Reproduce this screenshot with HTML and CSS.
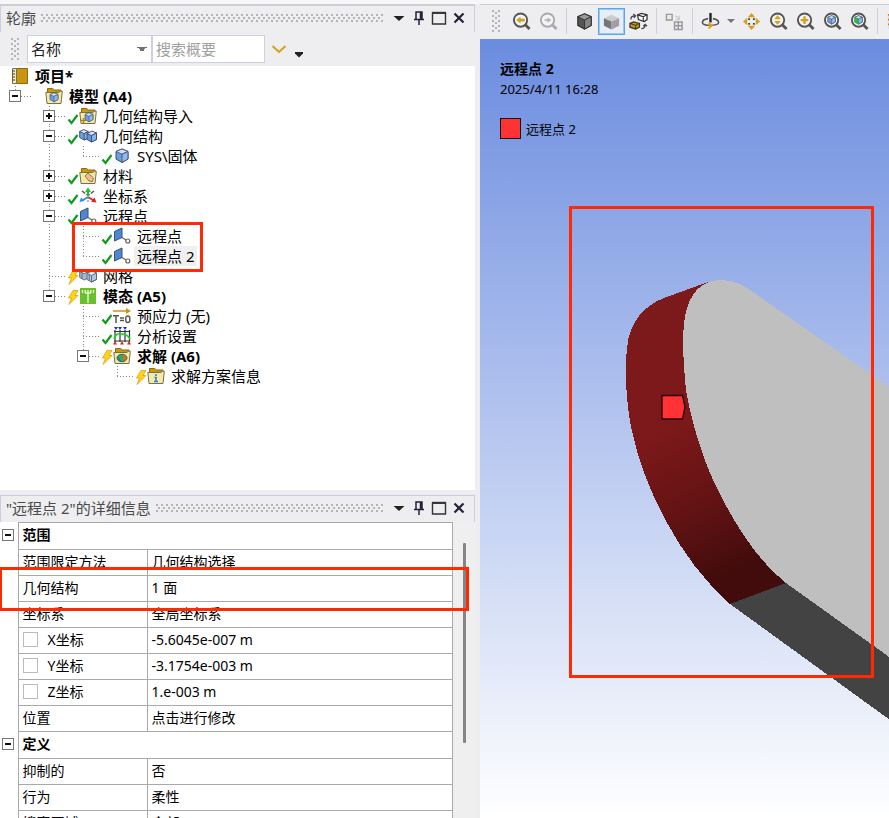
FILE: index.html
```html
<!DOCTYPE html>
<html lang="zh-CN">
<head>
<meta charset="utf-8">
<title>远程点 2</title>
<link rel="stylesheet" href="styles.css">
</head>
<body>
<svg class="defs" aria-hidden="true">
  <symbol id="check" viewBox="0 0 12 18"><path d="M1.500 12.500 4.500 16 10.500 8" fill="none" stroke="#129a1c" stroke-width="2.200"/></symbol>
  <symbol id="bolt" viewBox="0 0 12 18"><path d="M6 3.500h5L8 8.500h3L2 17.500 4.500 11H1.500z" fill="#ffd21c" stroke="#d9a400" stroke-width=".8"/></symbol>
  <symbol id="folder" viewBox="0 0 18 18"><path d="M2.500 5V1.500h5l2 1.500H16v4H2.500z" fill="#c9960f" stroke="#8d6a0c"/><path d="M.8 5.500h13l1.500-1.200h2L16 16.500H2z" fill="#f6e9a4" stroke="#77704c"/></symbol>
  <symbol id="cube" viewBox="0 0 18 18"><path d="m9 2 6 2.500v7.500l-6 3.500L3 12V4.500z" fill="#6d9fe0" stroke="#3b4a60"/><path d="m9 2 6 2.500-6 2.700-6-2.700z" fill="#cfe2fb" stroke="#3b4a60" stroke-width=".8"/><path d="M9 7.200v8.300l6-3.500V4.500z" fill="#8eb8ef" stroke="#3b4a60" stroke-width=".8"/></symbol>
  <symbol id="blocks" viewBox="0 0 18 18"><g stroke="#3b4a60" stroke-width=".9"><path d="M.7 4.500v6l4.500 2.500 4-2v-6z" fill="#6fa0e2"/><path d="m.7 4.500 4-2 4.500 2-4 2.200z" fill="#d7e6fa"/><path d="M5.200 6.700V13l4-2V4.500z" fill="#8db6ec"/><path d="M8 6.500v6l4.500 2.500 5-2.500V6z" fill="#5f95e2"/><path d="m8 6.500 5-2.500 4.500 2-5 2.500z" fill="#d7e6fa"/><path d="M12.500 8.500V15l5-2.500V6z" fill="#84b2f2"/></g></symbol>
  <symbol id="mesh" viewBox="0 0 18 18"><g stroke="#5b6470" stroke-width=".9"><path d="M.7 4.500v6l4.500 2.500 4-2v-6z" fill="#a9b9d0"/><path d="m.7 4.500 4-2 4.500 2-4 2.200z" fill="#e8eef7"/><path d="M8 6.500v6l4.500 2.500 5-2.500V6z" fill="#b3c6e2"/><path d="m8 6.500 5-2.500 4.500 2-5 2.500z" fill="#e8eef7"/><path d="M12.500 8.500V15l5-2.500V6M3 5.600v6M10.200 7.500v6" fill="none"/></g></symbol>
  <symbol id="remote" viewBox="0 0 18 18"><path d="M1.500 4.500 9 1v9.500L1.500 14z" fill="#4b86dc" stroke="#3f5068"/><path d="M9 10.500 13 13" stroke="#666" stroke-width="1.300"/><circle cx="14.800" cy="14" r="2" fill="#fff" stroke="#666" stroke-width="1.200"/></symbol>
  <symbol id="mag" viewBox="0 0 20 20"><circle cx="9" cy="8.500" r="7" fill="#f4f4f6" stroke="currentColor" stroke-width="2"/><path d="m13.500 13 5 5" stroke="currentColor" stroke-width="3"/></symbol>
</svg>

<div class="app">
  <div class="side">
    <section class="panel outline">
      <header class="title">
        <h2>轮廓</h2><span class="dots"></span>
        <button type="button" aria-label="菜单"><svg viewBox="0 0 16 16"><path d="M2.500 6h11L8 11z" fill="#222"/></svg></button>
        <button type="button" aria-label="固定"><svg viewBox="0 0 16 16"><path d="M5 9.500V2h6v7.500M3 9.500h10M8 10v5M9.500 2v7" fill="none" stroke="#222238" stroke-width="1.500"/></svg></button>
        <button type="button" aria-label="最大化"><svg viewBox="0 0 16 16"><path d="M1.500 3h13v11h-13z" fill="none" stroke="#333" stroke-width="1.400"/><path d="M1 2.800h14" stroke="#333" stroke-width="2"/></svg></button>
        <button type="button" aria-label="关闭"><svg viewBox="0 0 16 16"><path d="m3.500 3.500 9 9m0-9-9 9" stroke="#222238" stroke-width="2.200"/></svg></button>
      </header>
      <div class="filter">
        <span class="grip"></span>
        <select aria-label="筛选"><option>名称</option></select>
        <input type="text" placeholder="搜索概要" aria-label="搜索概要">
        <button type="button" class="expand" aria-label="展开"><svg viewBox="0 0 16 16"><path d="m1.500 5 6.500 6 6.500-6" fill="none" stroke="#d2a11d" stroke-width="2"/></svg></button>
        <button type="button" class="more" aria-label="更多"><svg viewBox="0 0 8 6"><path d="M0 0h8v1.500L4 5.500 0 1.500z" fill="#222"/></svg></button>
      </div>
      <ul class="tree">
        <li class="root"><div class="node"><svg class="icon" viewBox="0 0 18 18"><path d="M5.500 1.500h11v15h-11z" fill="#c9960f" stroke="#8d6a0c"/><path d="M1.500 1.500h4v15h-4z" fill="#f2e6bb" stroke="#77704c"/><path d="M1 4h3M1 7h3M1 10h3M1 13h3" stroke="#444"/></svg><b>项目*</b></div>
        <ul>
          <li><div class="node"><button type="button" class="tog" aria-label="折叠"></button><i class="lead"></i><span class="stat"></span><svg class="icon" viewBox="0 0 18 18"><use href="#folder"/><use href="#cube" x="3" y="4" width="12" height="13"/></svg><b>模型 (A4)</b></div>
          <ul>
            <li><div class="node"><button type="button" class="tog plus" aria-label="展开"></button><i class="lead"></i><svg class="stat"><use href="#check"/></svg><svg class="icon" viewBox="0 0 18 18"><use href="#folder"/><use href="#cube" x="4" y="4" width="12" height="13"/><path d="M2 13.500h5M4.500 11v5" stroke="#b98200" stroke-width="1.300"/></svg><span>几何结构导入</span></div></li>
            <li><div class="node"><button type="button" class="tog" aria-label="折叠"></button><i class="lead"></i><svg class="stat"><use href="#check"/></svg><svg class="icon"><use href="#blocks"/></svg><span>几何结构</span></div>
            <ul>
              <li><div class="node leaf"><i class="lead"></i><svg class="stat"><use href="#check"/></svg><svg class="icon"><use href="#cube"/></svg><span>SYS\固体</span></div></li>
            </ul></li>
            <li><div class="node"><button type="button" class="tog plus" aria-label="展开"></button><i class="lead"></i><svg class="stat"><use href="#check"/></svg><svg class="icon" viewBox="0 0 18 18"><use href="#folder"/><path d="m6 9 3-3 5.500 5-1 3.500-3.500-.5z" fill="#eebd8c" stroke="#8a6a4a" stroke-width=".9"/></svg><span>材料</span></div></li>
            <li><div class="node"><button type="button" class="tog plus" aria-label="展开"></button><i class="lead"></i><svg class="stat"><use href="#check"/></svg><svg class="icon" viewBox="0 0 18 18"><path d="m3 4 5 4M15 4l-5 4" stroke="#555" stroke-width="1.500" stroke-dasharray="4 1.500"/><path d="M9 9V4" stroke="#14c81e" stroke-width="2"/><path d="M6 5h6L9 .5z" fill="#14c81e"/><path d="m9 10-5 3" stroke="#2a8cf0" stroke-width="1.600"/><path d="m.5 15 1.500-4.500 3.500 3.500z" fill="#2a8cf0"/><path d="m9 10 5 3" stroke="#e02020" stroke-width="1.600"/><path d="m17.500 15.500-5.500-.8 3.500-4.200z" fill="#e02020"/><path d="M9 10v6" stroke="#777" stroke-dasharray="2 1"/></svg><span>坐标系</span></div></li>
            <li><div class="node"><button type="button" class="tog" aria-label="折叠"></button><i class="lead"></i><svg class="stat"><use href="#check"/></svg><svg class="icon"><use href="#remote"/></svg><span>远程点</span></div>
            <ul>
              <li><div class="node leaf"><i class="lead"></i><svg class="stat"><use href="#check"/></svg><svg class="icon"><use href="#remote"/></svg><span>远程点</span></div></li>
              <li><div class="node leaf"><i class="lead"></i><svg class="stat"><use href="#check"/></svg><svg class="icon"><use href="#remote"/></svg><span class="picked">远程点 2</span></div></li>
            </ul></li>
            <li><div class="node leaf"><i class="lead"></i><svg class="stat"><use href="#bolt"/></svg><svg class="icon"><use href="#mesh"/></svg><span>网格</span></div></li>
            <li><div class="node"><button type="button" class="tog" aria-label="折叠"></button><i class="lead"></i><svg class="stat"><use href="#bolt"/></svg><svg class="icon" viewBox="0 0 18 18"><path d="M1 1h16v16H1z" fill="#6abf2a"/><path d="M9 3v13M3.500 3v3M6.200 3v3M11.800 3v3M14.500 3v3M6 6h6" fill="none" stroke="#eaffdc" stroke-width="1.300"/></svg><b>模态 (A5)</b></div>
            <ul>
              <li><div class="node leaf"><i class="lead"></i><svg class="stat"><use href="#check"/></svg><svg class="icon" viewBox="0 0 18 18"><path d="M0 4h14" stroke="#c9960f" stroke-width="1.500"/><path d="m13 1 5 3-5 3z" fill="#c9960f"/><path d="M0 8.800h6M3 8.500V16M7 11h4M7 13.500h4" stroke="#555" stroke-width="1.500"/><rect x="12.800" y="9" width="4" height="6.500" rx="2" fill="none" stroke="#555" stroke-width="1.400"/></svg><span>预应力 (无)</span></div></li>
              <li><div class="node leaf"><i class="lead"></i><svg class="stat"><use href="#check"/></svg><svg class="icon" viewBox="0 0 18 18"><path d="M2 3v12M7 3v12M12 3v12M16.500 3v12M1 4.500h16M1 14h16" stroke="#333" stroke-width="1.200"/><path d="M1 12C3 6 6 6.500 8.500 7s6 0 8.500 5" fill="none" stroke="#19d52b" stroke-width="1.700"/><path d="M1 0h4L3 3zM5 0h4L7 3zM10 0h4l-2 3z" fill="#1a2de8"/><path d="m0 17.500 2-3.500 2 3.500zm7 0 2-3.500 2 3.500zm7 0 2-3.500 2 3.500z" fill="#e82020"/></svg><span>分析设置</span></div></li>
              <li><div class="node"><button type="button" class="tog" aria-label="折叠"></button><i class="lead"></i><svg class="stat"><use href="#bolt"/></svg><svg class="icon" viewBox="0 0 18 18"><use href="#folder"/><ellipse cx="9" cy="11" rx="5" ry="3.800" fill="#29b34a" stroke="#444" stroke-width=".8"/><path d="M5 9c1 3 3 5 5 5.500-3 .5-6-2-5-5.500z" fill="#2465e0"/><path d="M10 8c3 0 4.500 3 2.500 6-2-1-3-3-2.500-6z" fill="#e0672a"/></svg><b>求解 (A6)</b></div>
              <ul>
                <li><div class="node leaf"><i class="lead"></i><svg class="stat"><use href="#bolt"/></svg><svg class="icon" viewBox="0 0 18 18"><use href="#folder"/><path d="M9 7v2M7.500 10.500H9v4M7 14.500h4" fill="none" stroke="#2a83d8" stroke-width="1.600"/></svg><span>求解方案信息</span></div></li>
              </ul></li>
            </ul></li>
          </ul></li>
        </ul></li>
      </ul>
    </section>

    <section class="panel details">
      <header class="title">
        <h2>"远程点 2"的详细信息</h2><span class="dots"></span>
        <button type="button" aria-label="菜单"><svg viewBox="0 0 16 16"><path d="M2.500 6h11L8 11z" fill="#222"/></svg></button>
        <button type="button" aria-label="固定"><svg viewBox="0 0 16 16"><path d="M5 9.500V2h6v7.500M3 9.500h10M8 10v5M9.500 2v7" fill="none" stroke="#222238" stroke-width="1.500"/></svg></button>
        <button type="button" aria-label="最大化"><svg viewBox="0 0 16 16"><path d="M1.500 3h13v11h-13z" fill="none" stroke="#333" stroke-width="1.400"/><path d="M1 2.800h14" stroke="#333" stroke-width="2"/></svg></button>
        <button type="button" aria-label="关闭"><svg viewBox="0 0 16 16"><path d="m3.500 3.500 9 9m0-9-9 9" stroke="#222238" stroke-width="2.200"/></svg></button>
      </header>
      <div class="sheet">
        <table>
          <colgroup><col class="c-tog"><col class="c-name"><col></colgroup>
          <tr class="group"><td><button type="button" class="tog" aria-label="折叠"></button></td><th colspan="2">范围</th></tr>
          <tr><td></td><td>范围限定方法</td><td>几何结构选择</td></tr>
          <tr><td></td><td>几何结构</td><td>1 面</td></tr>
          <tr><td></td><td>坐标系</td><td>全局坐标系</td></tr>
          <tr><td></td><td><label><input type="checkbox">X坐标</label></td><td>-5.6045e-007 m</td></tr>
          <tr><td></td><td><label><input type="checkbox">Y坐标</label></td><td>-3.1754e-003 m</td></tr>
          <tr><td></td><td><label><input type="checkbox">Z坐标</label></td><td>1.e-003 m</td></tr>
          <tr><td></td><td>位置</td><td>点击进行修改</td></tr>
          <tr class="group"><td><button type="button" class="tog" aria-label="折叠"></button></td><th colspan="2">定义</th></tr>
          <tr><td></td><td>抑制的</td><td>否</td></tr>
          <tr><td></td><td>行为</td><td>柔性</td></tr>
          <tr><td></td><td>搜索区域</td><td>全部</td></tr>
        </table>
        <div class="track"><div class="thumb"></div></div>
      </div>
    </section>
  </div>

  <main class="view">
    <div class="tools">
      <span class="grip"></span>
      <button type="button" aria-label="上一视图"><svg viewBox="0 0 20 20"><use href="#mag"/><path d="M4.500 8.500 9 5v2h4.500v3H9v2z" fill="#d2a11d"/></svg></button>
      <button type="button" class="off" aria-label="下一视图"><svg viewBox="0 0 20 20"><use href="#mag"/><path d="M13 8.500 9 5.500v2H6v2h3v2z" fill="#b5b5b5"/></svg></button>
      <span class="sep"></span>
      <button type="button" aria-label="着色与边"><svg viewBox="0 0 20 20"><path d="m10 2 7 3v9l-7 4-7-4V5z" fill="#555" stroke="#333" stroke-width="1.400"/><path d="m10 2 7 3-7 3.500L3 5z" fill="#999" stroke="#333"/><path d="M10 8.500V18l7-4V5z" fill="#858585" stroke="#333"/></svg></button>
      <button type="button" class="on" aria-label="着色"><svg viewBox="0 0 20 20"><path d="m10 3 8 3.500-8 3.500-8-3.500z" fill="#ccc"/><path d="M2 6.500v8l8 4V10z" fill="#777"/><path d="M18 6.500v8l-8 4V10z" fill="#a0a0a0"/></svg></button>
      <button type="button" aria-label="显示样式"><svg viewBox="0 0 20 20"><path d="m9 3 4-1.500L19 3v5l-3 2-6-2z" fill="#fff" stroke="#333" stroke-width="1.300"/><path d="m9 3 6 2v5m0-5 4-2" fill="none" stroke="#333" stroke-width="1.200"/><path d="m1 12 4-1.500 6 1.500v4l-4 2-6-2z" fill="#c9960f" stroke="#333" stroke-width="1.300"/><path d="m1 12 6 2v4m0-4 4-2" fill="none" stroke="#333"/><path d="M2 8c0-3 1-4 4-4M4.500 2 7 4 5 6M13 17.500c3 0 4-1 4-4M15 15l2-2 2 2" fill="none" stroke="#444" stroke-width="1.300"/></svg></button>
      <span class="sep"></span>
      <button type="button" aria-label="复制"><svg viewBox="0 0 20 20" fill="none" stroke="#999" stroke-width="1.500"><path d="M1.500 2.500h6v6h-6zM10 10.500h8v8h-8zM14 10.500v8M10 14.500h8"/><path d="m11 4 4 4m0-4v4h-4" stroke="#ccc"/></svg></button>
      <span class="sep"></span>
      <button type="button" aria-label="旋转"><svg viewBox="0 0 20 20"><path d="M7.500 7C4 7.500 1.500 9 1.500 11c0 2 4 3 8.500 3s8.500-1 8.500-3c0-1.800-2.500-3.300-6-4" fill="none" stroke="#555" stroke-width="1.700"/><path d="M10 1v10" stroke="#222" stroke-width="2.500"/><path d="m8 10.500 5 3.500-5 4.500z" fill="#d2a11d"/></svg></button>
      <button type="button" class="caret" aria-label="旋转选项"><svg viewBox="0 0 8 6"><path d="M0 1h8L4 5z" fill="#777"/></svg></button>
      <button type="button" aria-label="平移"><svg viewBox="0 0 20 20"><path d="m10 1 4 4.500H6zM10 19l4-4.500H6zM1 10l4.500-4v8zM19 10l-4.500-4v8z" fill="#d2a11d"/><path d="M6.500 6.500h2v2h-2zM11.500 6.500h2v2h-2zM6.500 11.500h2v2h-2zM11.500 11.500h2v2h-2z" fill="#444"/></svg></button>
      <button type="button" aria-label="缩放"><svg viewBox="0 0 20 20"><use href="#mag"/><path d="m9 3.500 3.500 4h-7zM9 13.500l3.500-4h-7z" fill="#d2a11d"/></svg></button>
      <button type="button" aria-label="框选缩放"><svg viewBox="0 0 20 20"><use href="#mag"/><path d="M9 4.500v8M5 8.500h8" stroke="#d2a11d" stroke-width="2.500"/></svg></button>
      <button type="button" aria-label="缩放到合适"><svg viewBox="0 0 20 20"><use href="#mag"/><use href="#cube" x="3" y="2.500" width="12" height="12"/></svg></button>
      <button type="button" aria-label="缩放到选择"><svg viewBox="0 0 20 20"><use href="#mag"/><use href="#cube" x="3" y="2.500" width="12" height="12"/><path d="M5 5.500 9 7.300v5.500L5 11z" fill="#1fc03a"/></svg></button>
      <span class="sep"></span>
      <button type="button" aria-label="放大镜"><svg viewBox="0 0 20 20"><path d="M2 3h16M2 8h16M2 13h16M4 3v15" stroke="#c4793a" stroke-width="2"/></svg></button>
    </div>
    <div class="canvas">
      <svg class="scene" viewBox="480 39 409 779" preserveAspectRatio="xMinYMin slice" aria-hidden="true">
        <defs><linearGradient id="face" x1="0" y1="0" x2=".25" y2="1"><stop offset="0" stop-color="#7d1a1b"/><stop offset=".5" stop-color="#7c1819"/><stop offset=".75" stop-color="#641314"/><stop offset="1" stop-color="#430c0c"/></linearGradient></defs>
        <g shape-rendering="crispEdges">
          <path d="M730 604 786 583 1090 801V865z" fill="#434343"/>
          <path d="M708 282 664 298C643 306 632 322 628 340 624 368 626 400 631 427 640 470 655 500 666 521 683 553 705 582 730 604L786 583 760 297z" fill="url(#face)"/>
          <path d="M786 583C750 555 725 505 713 480 700 451 690 415 686 390 682 350 682 325 687 308 694 285 709 280 722 280 736 280 747 287 760 297L889 387 1090 527V801z" fill="#bfbfbf"/>
        </g>
        <path d="M662 395.500h20.500l2.500 11.500-2.500 12H662z" fill="#f33" stroke="#2a0505" stroke-width="1.300"/>
      </svg>
      <div class="legend">
        <strong>远程点 2</strong>
        <time>2025/4/11 16:28</time>
        <div class="key"><span class="swatch"></span>远程点 2</div>
      </div>
    </div>
  </main>
  <div class="mark mark-tree"></div>
  <div class="mark mark-row"></div>
  <div class="mark mark-face"></div>
</div>
</body>
</html>
```
FILE: styles.css
```css
* { box-sizing: border-box; }

body {
  margin: 0;
  font-family: "Noto Sans", "Noto Sans CJK SC", sans-serif;
  font-size: 15px;
  color: #000;
  background: #eeeef0;
}

button {
  padding: 0;
  border: 0;
  background: none;
  display: flex;
  align-items: center;
  justify-content: center;
  flex: none;
}

ul { list-style: none; margin: 0; padding: 0; }

.defs { position: absolute; width: 0; height: 0; }

.app {
  position: relative;
  display: flex;
  gap: 5px;
  height: 100vh;
  overflow: hidden;
  border-top: 4px solid #f7f7f7;
}

.side {
  width: 475px;
  flex: none;
  display: flex;
  flex-direction: column;
  gap: 5px;
  border-top: 1px solid #cfcfd2;
}

.panel { display: flex; flex-direction: column; overflow: hidden; }
.outline { flex: 1; }
.details { flex: 0 0 323px; }

.title {
  display: flex;
  align-items: center;
  flex: none;
  height: 27px;
  padding: 0 5px 2px;
  border: 1px solid #cdcde0;
  border-bottom: 0;
}
.title h2 { margin: 0; font-size: 15px; font-weight: 400; line-height: 24px; color: #4a4a4a; }
.title button { width: 20px; height: 20px; }
.title svg { width: 16px; height: 16px; }

.dots {
  flex: 1;
  height: 8px;
  margin: 0 6px 0 5px;
  background:
    radial-gradient(circle at 1px 1px, #b4b4b8 1px, transparent 1px) 0 0 / 5px 6px,
    radial-gradient(circle at 1px 1px, #b4b4b8 1px, transparent 1px) 2px 3px / 5px 6px;
}
.grip {
  flex: none;
  width: 8px;
  height: 22px;
  background:
    radial-gradient(circle at 1px 1px, #b4b4b8 1px, transparent 1px) 0 0 / 6px 5px,
    radial-gradient(circle at 1px 1px, #b4b4b8 1px, transparent 1px) 3px 2px / 6px 5px;
}

.filter { display: flex; align-items: center; flex: none; height: 34px; padding-left: 11px; }
.filter select,
.filter input {
  height: 28px;
  border: 1px solid #ccd0e0;
  border-radius: 0;
  background-color: #fff;
  font: inherit;
  color: #222;
  padding: 0 3px;
}
.filter select {
  width: 125px;
  margin-left: 8px;
  appearance: none;
  background-image: linear-gradient(to bottom left, #707070 50%, transparent 50%), linear-gradient(to bottom right, #707070 50%, transparent 50%);
  background-size: 5px 5px;
  background-position: right 4px center, right 9px center;
  background-repeat: no-repeat;
}
.filter select {
  background-image: linear-gradient(to bottom right, #707070 50%, transparent 50%), linear-gradient(to bottom left, #707070 50%, transparent 50%);
}
.filter input { width: 113px; }
.filter input::placeholder { color: #a0a0a0; }
.expand { width: 16px; margin-left: 6px; }
.expand svg { width: 16px; height: 16px; }
.more { width: 8px; margin: 12px 0 0 8px; }
.more svg { width: 8px; height: 6px; }

.tree { flex: 1; background: #fff; }
.node { display: flex; align-items: center; height: 20px; line-height: 20px; white-space: nowrap; }
.node span:last-child, .node b { margin-left: 3px; padding: 0 3px; }
.root > .node { padding-left: 11px; }
.root > ul { margin-left: 9px; }
.root ul ul { margin-left: 34px; }
.root li {
  background: repeating-linear-gradient(#888 0 1px, transparent 1px 3px) 6px 0 / 1px 100% no-repeat;
}
.root li:last-child { background-size: 1px 10px; }
.lead {
  flex: none;
  width: 12px;
  height: 1px;
  background: repeating-linear-gradient(90deg, #888 0 1px, transparent 1px 3px);
}
.leaf .lead { width: 18px; margin-left: 6px; }
.stat { flex: none; width: 12px; height: 18px; }
.icon { flex: none; width: 18px; height: 18px; }
.picked { background: #f0f0f0; }

.tog {
  width: 12px;
  height: 12px;
  border: 1px solid #777;
  background: linear-gradient(#111, #111) center / 6px 2px no-repeat #fff;
}
.tog.plus {
  background:
    linear-gradient(#111, #111) center / 6px 2px no-repeat,
    linear-gradient(#111, #111) center / 2px 6px no-repeat #fff;
}

.sheet { flex: 1; display: flex; min-height: 0; background: #fff; }
table {
  flex: 1;
  align-self: flex-start;
  table-layout: fixed;
  border-collapse: collapse;
  font-size: 14px;
  line-height: 20px;
}
.c-tog { width: 18px; }
.c-name { width: 129px; }
tr { height: 26px; }
.group { height: 27px; }
td, th { border: 1px solid #a9a9a9; padding: 0 4px 2px; text-align: left; white-space: nowrap; }
th { font-weight: 700; }
td:first-child { border-width: 0 1px 0 0; padding: 0 0 2px 2px; }
label { display: flex; align-items: center; gap: 10px; }
label input { appearance: none; width: 15px; height: 15px; margin: 0; border: 1px solid #bbb; background: #fff; }
.track { flex: none; width: 22px; padding: 21px 0 0 10px; background: #efefef; }
.thumb { width: 3px; height: 200px; background: #858585; border-radius: 1px; }

.view { flex: 1; min-width: 0; display: flex; flex-direction: column; border-top: 1px solid #cfcfd2; }
.tools { display: flex; align-items: center; flex: none; height: 34px; padding: 0 0 2px 12px; overflow: hidden; }
.tools .grip { margin-right: 8px; }
.tools button { width: 27px; height: 27px; color: #555; }
.tools button svg { width: 19px; height: 19px; }
.tools .off { color: #aaa; }
.tools .on { border: 1px solid #5aa5ee; outline: 1px solid #9cc8f5; outline-offset: -2px; background: #e6eefa; }
.tools .caret { width: 14px; }
.tools .caret svg { width: 8px; height: 6px; }
.sep { flex: none; width: 1px; height: 26px; margin: 0 4px; background: #cdd0dc; }

.canvas { flex: 1; position: relative; overflow: hidden; background: linear-gradient(#6b8cdf, #fff); }
.scene { position: absolute; inset: 0; width: 100%; height: 100%; }
.legend { position: relative; display: flex; flex-direction: column; padding: 20px; line-height: 20px; font-size: 13px; }
.legend strong { font-size: 14px; }
.key { display: flex; align-items: center; gap: 5px; margin-top: 19px; }
.swatch { width: 21px; height: 21px; border: 1px solid #111; background: #f33; }

.mark { position: absolute; border: 3px solid #ff2a04; pointer-events: none; }
.mark-tree { left: 72px; top: 218px; width: 131px; height: 50px; }
.mark-row { left: -1px; top: 563px; width: 470px; height: 44px; }
.mark-face { left: 569px; top: 202px; width: 305px; height: 472px; }
```
